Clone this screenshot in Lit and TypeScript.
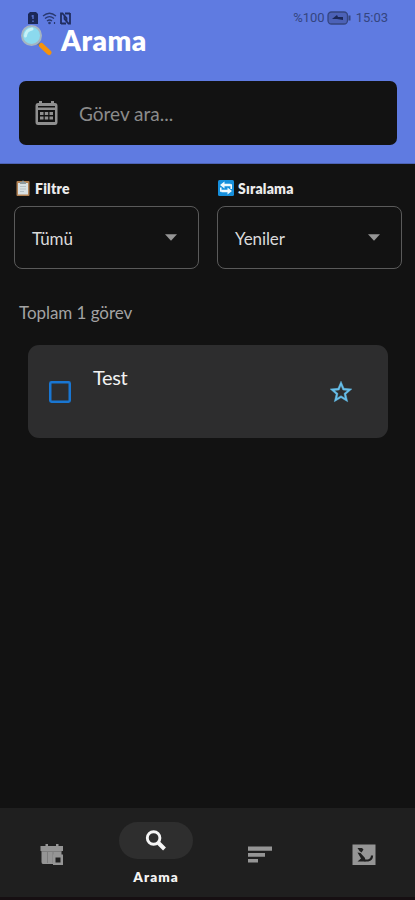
import { LitElement, html, css } from "lit";
import { customElement, property } from "lit/decorators.js";

@customElement("select-field")
class SelectField extends LitElement {
  @property() value = "";
  static styles = css`
    :host { display: block; }
    .box {
      box-sizing: border-box; height: 63px; border: 1px solid #5a5a5a; border-radius: 8px;
      display: flex; align-items: center; justify-content: space-between;
      padding: 2px 21px 0 17px; color: #dadada; font-size: 17px; letter-spacing: -0.1px;
    }
    .arrow { width: 12px; height: 7px; margin-bottom: 3px; display: block; }
  `;
  render() {
    return html`<div class="box">
      <span>${this.value}</span>
      <svg class="arrow" viewBox="0 0 12 7"><path d="M0 0.3H12L6 6.7Z" fill="#969696" /></svg>
    </div>`;
  }
}

@customElement("app-root")
class AppRoot extends LitElement {
  static styles = css`
    :host {
      display: flex; flex-direction: column; width: 415px; height: 900px; overflow: hidden;
      background: #121212; color: #fff; font-family: Lato, "Noto Sans", sans-serif;
    }
    svg { display: block; flex: none; }
    header { height: 164px; box-sizing: border-box; background: #5f7be1; border-bottom: 1px solid #4d63b5; }
    .status {
      display: flex; justify-content: space-between; align-items: center; height: 14px;
      padding: 11px 27px 0 28px; color: #34457f; font: 13px/14px Roboto, sans-serif;
    }
    .right { display: flex; align-items: center; gap: 2px; }
    .time { margin-left: 3px; }
    .title { display: flex; align-items: center; gap: 9px; height: 30px; padding-left: 20px; }
    h1 { margin: 0; font-size: 28px; line-height: 30px; font-weight: 800; letter-spacing: 0.5px; }
    .search {
      margin: 26px 18px 0 19px; height: 64px; border-radius: 7px; background: #121212;
      display: flex; align-items: center; gap: 21px; padding-left: 16px; box-sizing: border-box;
      color: #8b8b8b; font-size: 19px;
    }
    .filters { display: grid; grid-template-columns: 185px 185px; gap: 18px; padding: 16px 14px 0; }
    .label {
      display: flex; align-items: center; gap: 5px; height: 16px; margin-bottom: 10px; padding-left: 2px;
      font-size: 14px; font-weight: 800; color: #ececec; letter-spacing: 0.2px;
    }
    .label.sort { padding-left: 1px; gap: 4px; }
    .total { margin: 34px 0 0 19px; font-size: 17px; line-height: 20px; color: #a3a3a3; letter-spacing: -0.05px; }
    .card {
      margin: 22px 27px 0 28px; height: 93px; border-radius: 11px; background: #2d2d2e;
      display: flex; align-items: center; box-sizing: border-box; padding: 0 34px 0 21px;
    }
    .name { flex: 1; align-self: flex-start; margin: 19px 0 0 22px; font-size: 20px; line-height: 26px; color: #f2f2f2; letter-spacing: -0.4px; }
    nav {
      margin-top: auto; height: 92px; box-sizing: border-box; background: #1f1f1f; border-bottom: 3px solid #160f12;
      display: grid; grid-template-columns: repeat(4, 1fr); color: #959595;
    }
    .item { display: flex; flex-direction: column; align-items: center; padding: 34px 0 0 1px; }
    .item.active { padding-top: 14px; color: #f4f4f4; }
    .pill { width: 74px; height: 37px; border-radius: 19px; background: #2e2e2e; display: grid; place-items: center; }
    .caption { margin-top: 10px; font-size: 13.5px; line-height: 17px; font-weight: 800; letter-spacing: 1.1px; }
  `;

  render() {
    return html`
      <header>
        <div class="status">
          <svg width="44" height="13" viewBox="0 0 44 13">
            <path d="M2 0H8L10 2V12H0V2Z" fill="#1b2858" />
            <path d="M5 3V7M5 8.500V10M3.500 4H5" stroke="#5f7be1" stroke-width="1.200" />
            <g fill="none" stroke="#293970" stroke-width="1.300">
              <path d="M15 4Q21.500 -1.500 28 4M17 6.500Q21.500 2.800 26 6.500M19 9Q21.500 7 24 9" />
            </g>
            <circle cx="21.500" cy="11" r="1.300" fill="#293970" />
            <path d="M26.500 10V12" stroke="#293970" stroke-width="1.200" />
            <path d="M33 12V1.500H34.500L38.500 6V9M42 1V11.500H40.500L36.500 7V4M37 1.500H42M33 11.500H38" fill="none" stroke="#202d60" stroke-width="1.800" />
          </svg>
          <div class="right">
            <span>%100</span>
            <svg width="24" height="14" viewBox="0 0 24 14">
              <rect x="1" y="1" width="19.500" height="12" rx="3.500" fill="#4c62b7" stroke="#34457f" stroke-width="1.300" />
              <path d="M22.500 4.500V9.500" stroke="#34457f" stroke-width="2" />
              <path d="M5 8L10 4L11 6L16 6V9L10 8Z" fill="#1b2858" />
            </svg>
            <span class="time">15:03</span>
          </div>
        </div>
        <div class="title">
          <svg width="32" height="32" viewBox="0 0 32 32">
            <path d="M18 19L21 22" stroke="#69788b" stroke-width="3" />
            <path d="M21.500 21.500L29 28.500" stroke="#f5920b" stroke-width="5" stroke-linecap="round" />
            <circle cx="11.500" cy="11.500" r="9.500" fill="#8bd9ee" stroke="#a4b5c2" stroke-width="2" />
            <path d="M5.500 12Q6 6 12 5" fill="none" stroke="#c5f1f8" stroke-width="3" stroke-linecap="round" />
          </svg>
          <h1>Arama</h1>
        </div>
        <div class="search">
          <svg width="23" height="26" viewBox="0 0 23 26">
            <path fill="#8f8f8f" fill-rule="evenodd" d="M4 1H7V3H16V1H19V3H20Q22.500 3 22.500 6V22Q22.500 25 20 25H3Q.5 25 .5 22V6Q.5 3 3 3H4ZM3 10V22H20V10ZM3 6V7.500H20V6Z" />
            <path fill="#8f8f8f" d="M5 12H8.500V15H5ZM9.800 12H13.200V15H9.800ZM14.500 12H18V15H14.500ZM5 16.500H8.500V19.500H5ZM9.800 16.500H13.200V19.500H9.800ZM14.500 16.500H18V19.500H14.500Z" />
          </svg>
          <span>Görev ara...</span>
        </div>
      </header>
      <section class="filters">
        <div>
          <div class="label">
            <svg width="14" height="16" viewBox="0 0 14 16">
              <rect x=".5" y="1" width="13" height="15" rx="1" fill="#b28254" />
              <rect x="2" y="3" width="10" height="11.500" fill="#d9e1e4" />
              <path d="M4 4V2H5.500Q7 -.8 8.500 2H10V4Z" fill="#8e999d" />
              <path d="M4 6.500H10M4 9H10M4 11.500H8" stroke="#b7c2c7" />
            </svg>
            <span>Filtre</span>
          </div>
          <select-field .value=${"Tümü"}></select-field>
        </div>
        <div>
          <div class="label sort">
            <svg width="16" height="16" viewBox="0 0 16 16">
              <rect width="16" height="16" rx="1.500" fill="#168fdc" />
              <path d="M6.500 1.500L2 5L6.500 8.500V6.300H12.500V3.700H6.500ZM9.500 7.500V9.700H3.500V12.300H9.500V14.500L14 11Z" fill="#eef9ff" />
              <path d="M11 5H13.200V9M5 11H2.800V7.500" fill="none" stroke="#eef9ff" stroke-width="1.600" />
            </svg>
            <span>Sıralama</span>
          </div>
          <select-field .value=${"Yeniler"}></select-field>
        </div>
      </section>
      <div class="total">Toplam 1 görev</div>
      <div class="card">
        <svg width="22" height="22" viewBox="0 0 22 22">
          <rect x="1.250" y="1.250" width="19.500" height="19.500" rx="1.200" fill="none" stroke="#1976d2" stroke-width="2.500" />
        </svg>
        <div class="name">Test</div>
        <svg width="26" height="26" viewBox="0 0 24 24">
          <path fill="#66bfeb" d="M22 9.240l-7.190-.620L12 2 9.190 8.630 2 9.240l5.460 4.730L5.820 21 12 17.270 18.180 21l-1.630-7.030L22 9.240zM12 15.400l-3.760 2.270 1-4.280-3.320-2.880 4.380-.380L12 6.100l1.710 4.040 4.380.380-3.320 2.880 1 4.280L12 15.400z" stroke="#66bfeb" stroke-width=".4" />
        </svg>
      </div>
      <nav>
        <div class="item">
          <svg width="26" height="26" viewBox="0 0 26 26">
            <path fill="#959595" d="M6.500 2H9V4H17V2H19.500V4H24V9H22.500V13H15V22H4Q2.500 22 2.500 20V9H1.500V4H6.500Z" />
            <path d="M3 9.500H22M8.500 10V21M14 10V21" stroke="#777" stroke-width=".8" />
            <path fill="#959595" fill-rule="evenodd" d="M14 12.500H24V23H14ZM16.500 15.500V20.500H21.500V15.500Z" />
          </svg>
        </div>
        <div class="item active">
          <div class="pill">
            <svg width="24" height="24" viewBox="0 0 24 24" fill="none" stroke="#f5f5f5">
              <circle cx="9.600" cy="9" r="6.300" stroke-width="2.900" />
              <path d="M14 13.500L20.500 20" stroke-width="4" />
            </svg>
          </div>
          <span class="caption">Arama</span>
        </div>
        <div class="item">
          <svg width="24" height="26" viewBox="0 0 24 26">
            <path d="M0 4.500H24V8.800H0ZM0 11H17V14.800H0ZM0 17H10V20.500H0Z" fill="#959595" />
          </svg>
        </div>
        <div class="item">
          <svg width="24" height="26" viewBox="0 0 24 26">
            <rect x=".5" y="2.500" width="23" height="20.500" fill="#959595" />
            <path d="M5.500 6H10L11.500 7.500L9.500 10.500L7.500 9ZM5.500 10.500L8.500 11L13 16L13.500 19.500H5.500L9 16.500Z" fill="#1f1f1f" />
            <path d="M12.500 18.500H16Q20 17.500 20 13.500" fill="none" stroke="#1f1f1f" stroke-width="2.200" />
          </svg>
        </div>
      </nav>
    `;
  }
}
